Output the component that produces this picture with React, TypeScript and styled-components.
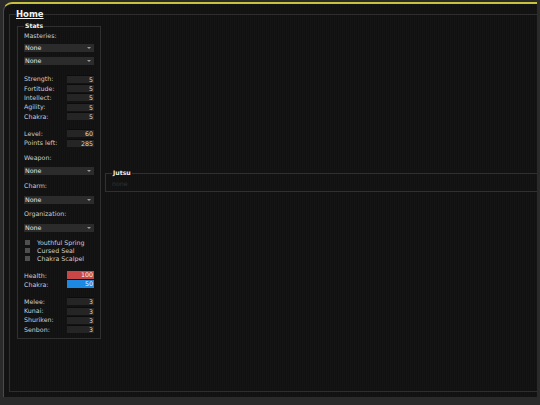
import React from "react";
import styled, { createGlobalStyle } from "styled-components";

const GlobalStyle = createGlobalStyle`
  html, body {
    margin: 0;
    padding: 0;
    background: #2a2a2a;
  }
  body {
    font-family: "DejaVu Sans", Verdana, sans-serif;
  }
`;

const Page = styled.div`
  width: 540px;
  height: 405px;
  background: #2a2a2a;
  padding: 2px 0 0 3px;
  box-sizing: border-box;
  overflow: hidden;
`;

const Panel = styled.div`
  width: 534px;
  height: 395px;
  box-sizing: border-box;
  border-top: 2px solid #c8c13c;
  border-left: 1px solid #4a4a4a;
  border-top-left-radius: 9px;
  background: repeating-linear-gradient(90deg, #141414 0 1px, #111111 1px 2px);
  padding: 5px 0 0 5px;
  overflow: hidden;
`;

const HomeSet = styled.fieldset`
  margin: 0;
  width: 560px;
  height: 383px;
  box-sizing: border-box;
  border: 1px solid #2e2e2e;
  padding: 0 0 0 6px;
`;

const HomeLegend = styled.legend`
  padding: 0;
  font-size: 8.5px;
  line-height: 10px;
  font-weight: bold;
  color: #f2f2f2;
  text-decoration: underline;
`;

const Body = styled.div`
  display: flex;
  align-items: center;
  gap: 4px;
  margin-top: 3px;
  margin-left: 1px;
`;

const Box = styled.fieldset<{ $grow?: boolean }>`
  margin: 0;
  border: 1px solid #303030;
  padding: 0 6px 5px 6px;
  box-sizing: border-box;
  ${(p) => (p.$grow ? "flex: 1; padding-bottom: 3px;" : "width: 84px; flex: none;")}
`;

const BoxLegend = styled.legend`
  padding: 0 1px;
  font-size: 6.2px;
  line-height: 8px;
  font-weight: bold;
  color: #f0f0f0;
`;

const Label = styled.div<{ $gap: number }>`
  margin-top: ${(p) => p.$gap}px;
  height: 8px;
  line-height: 8px;
  font-size: 6.3px;
  color: #cfcfcf;
  white-space: nowrap;
`;

const Select = styled.div<{ $gap: number }>`
  margin-top: ${(p) => p.$gap}px;
  width: 70px;
  height: 8px;
  box-sizing: border-box;
  background: #2b2b2b;
  color: #e6e6e6;
  font-size: 6.3px;
  line-height: 8px;
  padding-left: 1px;
  display: flex;
  justify-content: space-between;
  align-items: center;

  &::after {
    content: "";
    margin-right: 3px;
    border-left: 2px solid transparent;
    border-right: 2px solid transparent;
    border-top: 2px solid #9a9a9a;
  }
`;

const StatRow = styled.div<{ $gap: number }>`
  margin-top: ${(p) => p.$gap}px;
  display: flex;
  justify-content: space-between;
  align-items: center;
  width: 70px;
  height: 8px;
  font-size: 6.3px;
  color: #cfcfcf;
`;

const Value = styled.span<{ $tone?: "red" | "blue" }>`
  width: 27px;
  height: 8px;
  box-sizing: border-box;
  text-align: right;
  padding-right: 1px;
  color: ${(p) => (p.$tone ? "#f4f4f4" : "#dedede")};
  background: ${(p) =>
    p.$tone === "red" ? "#c84646" : p.$tone === "blue" ? "#1c8ae2" : "#252525"};
  border-top: ${(p) => (p.$tone ? "none" : "1px solid #0c0c0c")};
  line-height: ${(p) => (p.$tone ? "8px" : "7px")};
`;

const Check = styled.div<{ $gap: number }>`
  margin-top: ${(p) => p.$gap}px;
  display: flex;
  align-items: center;
  gap: 7px;
  height: 8px;
  padding-left: 1px;
  font-size: 6.3px;
  color: #cfcfcf;
  white-space: nowrap;

  &::before {
    content: "";
    width: 5px;
    height: 5px;
    background: #4f4f4f;
  }
`;

const Empty = styled.div`
  margin-top: 3px;
  height: 8px;
  line-height: 8px;
  font-size: 6.3px;
  color: #333;
`;

type Stat = { name: string; value: number; tone?: "red" | "blue" };

const rows = (list: Stat[], first: number) =>
  list.map((s, i) => (
    <StatRow key={s.name} $gap={i === 0 ? first : 1.33}>
      <span>{s.name}:</span>
      <Value $tone={s.tone}>{s.value}</Value>
    </StatRow>
  ));

export default function App() {
  return (
    <>
      <GlobalStyle />
      <Page>
        <Panel>
          <HomeSet>
            <HomeLegend>Home</HomeLegend>
            <Body>
              <Box>
                <BoxLegend>Stats</BoxLegend>
                <Label $gap={2}>Masteries:</Label>
                <Select $gap={4}>None</Select>
                <Select $gap={5}>None</Select>
                {rows(
                  [
                    { name: "Strength", value: 5 },
                    { name: "Fortitude", value: 5 },
                    { name: "Intellect", value: 5 },
                    { name: "Agility", value: 5 },
                    { name: "Chakra", value: 5 },
                  ],
                  9.7
                )}
                {rows(
                  [
                    { name: "Level", value: 60 },
                    { name: "Points left", value: 285 },
                  ],
                  9.3
                )}
                <Label $gap={7.4}>Weapon:</Label>
                <Select $gap={5}>None</Select>
                <Label $gap={7}>Charm:</Label>
                <Select $gap={6}>None</Select>
                <Label $gap={6}>Organization:</Label>
                <Select $gap={6}>None</Select>
                <Check $gap={6.7}>Youthful Spring</Check>
                <Check $gap={0}>Cursed Seal</Check>
                <Check $gap={0}>Chakra Scalpel</Check>
                {rows(
                  [
                    { name: "Health", value: 100, tone: "red" },
                    { name: "Chakra", value: 50, tone: "blue" },
                  ],
                  8.3
                )}
                {rows(
                  [
                    { name: "Melee", value: 3 },
                    { name: "Kunai", value: 3 },
                    { name: "Shuriken", value: 3 },
                    { name: "Senbon", value: 3 },
                  ],
                  9
                )}
              </Box>
              <Box $grow>
                <BoxLegend>Jutsu</BoxLegend>
                <Empty>none</Empty>
              </Box>
            </Body>
          </HomeSet>
        </Panel>
      </Page>
    </>
  );
}
